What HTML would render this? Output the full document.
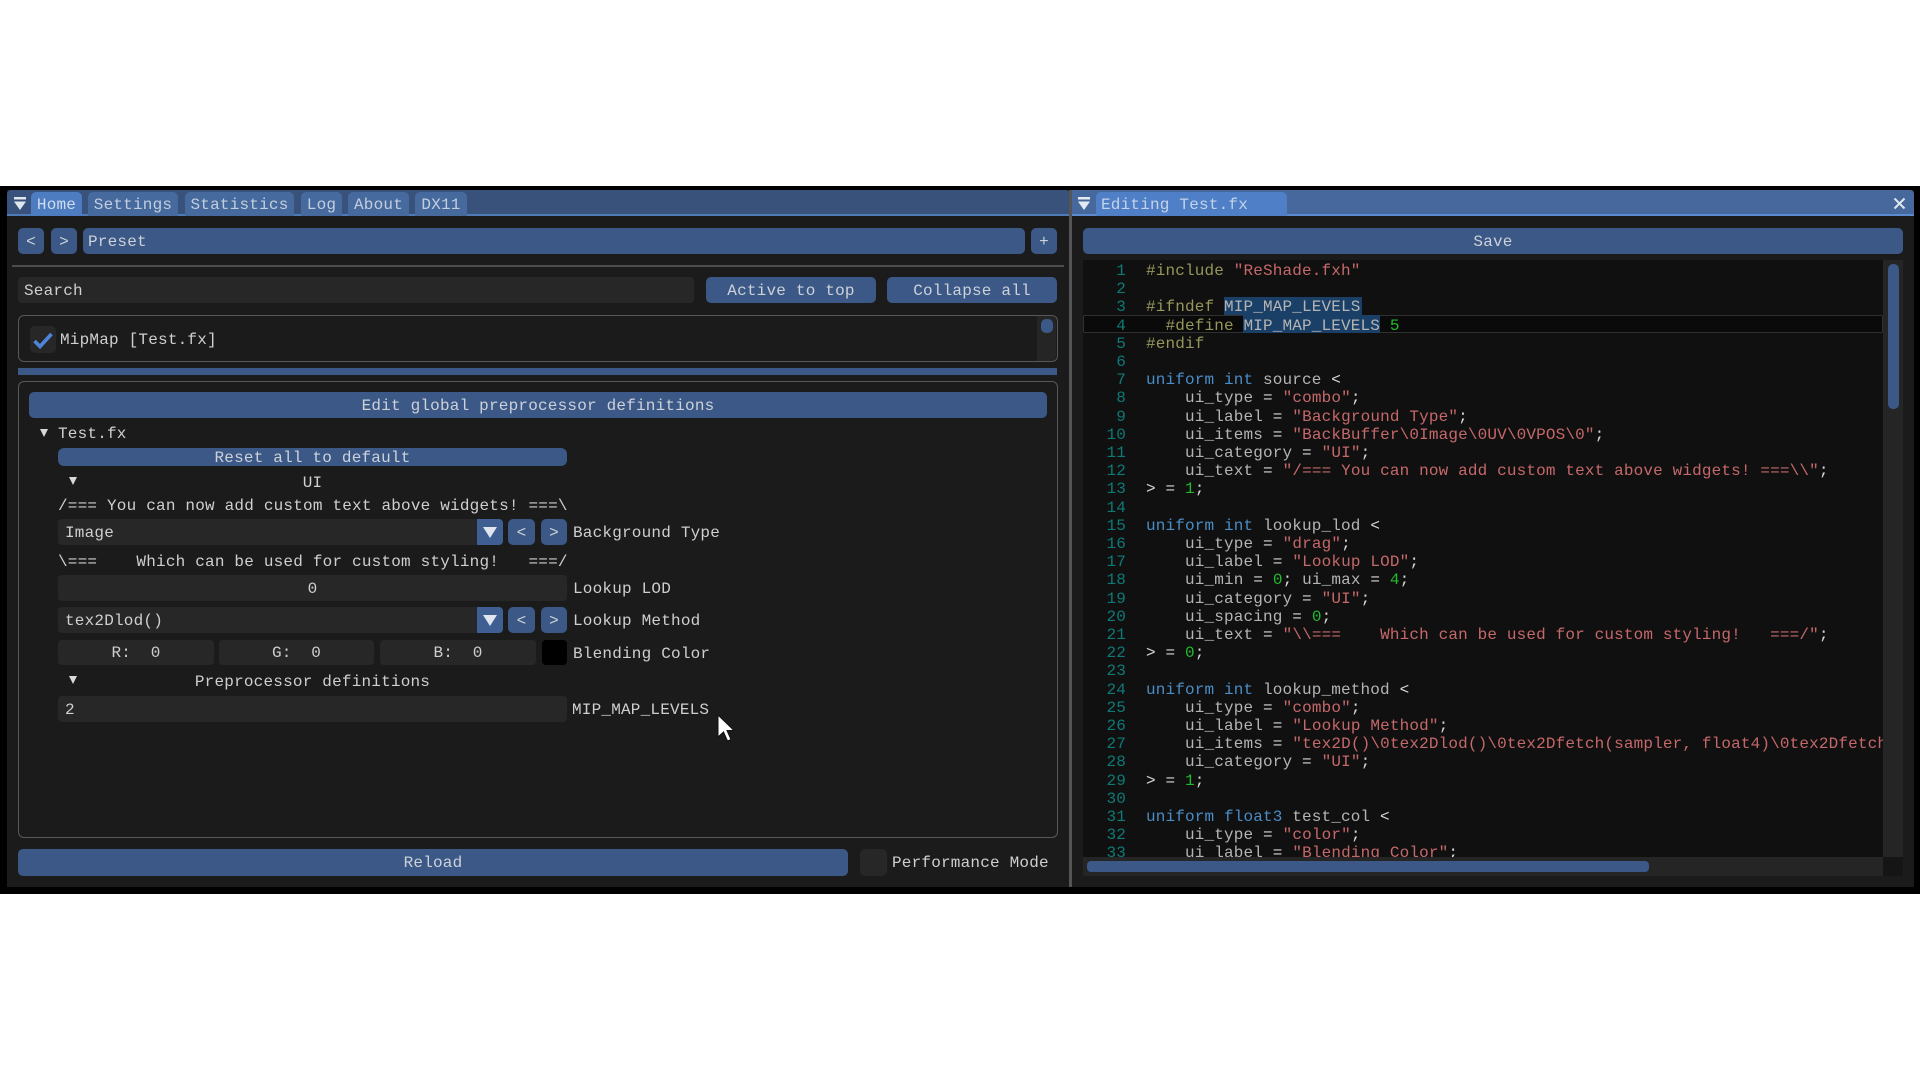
<!DOCTYPE html>
<html><head><meta charset="utf-8"><style>
html,body{margin:0;padding:0;background:#fff;width:1920px;height:1080px;overflow:hidden}
*{box-sizing:border-box}
#r{position:relative;width:1920px;height:1080px;overflow:hidden;font:16px/20px "Liberation Mono",monospace;letter-spacing:.2px;color:#cfcfcf;filter:blur(.35px)}
#r div{position:absolute}
.t{white-space:pre;height:20px;transform:translateY(1px)}
.c{text-align:center}
.b{background:#3b5886;border-radius:5px;text-align:center;color:#cdd2d9;white-space:pre;padding-top:1px}
.f{background:#272727;border-radius:4px;white-space:pre;padding-top:1px}
.tab{background:#476a9e;border-radius:5px 5px 0 0;top:192px;height:24px;line-height:25px;text-align:center;color:#c2cedd;padding-top:1px}
.box{border:1.5px solid #585858;border-radius:6px;background:#1b1b1b}
.tri{width:0;height:0;border-left:4px solid transparent;border-right:4px solid transparent;border-top:8px solid #d8d8d8}
.drop{background:#3f5f92;border-radius:0 4px 4px 0}
.drop i{position:absolute;left:6px;top:8px;width:0;height:0;border-left:7px solid transparent;border-right:7px solid transparent;border-top:11px solid #dfe6ee}
.ln{left:1086px;width:40px;text-align:right;color:#0e7a76;letter-spacing:.15px;transform:translateY(1px)}
.cd{left:1146px;white-space:pre;color:#b4b4b4;letter-spacing:.15px;transform:translateY(1px)}
.p{color:#96965a}.s{color:#c5686a}.k{color:#4a8cc6}.n{color:#22bb2e}.o{color:#d8d8d8}
</style></head><body><div id="r">
<div style="left:0;top:186px;width:1920px;height:708px;background:#000"></div>

<!-- left window -->
<div style="left:7px;top:190px;width:1063px;height:697px;background:#1b1b1b"></div>
<div style="left:7px;top:190px;width:1063px;height:26px;background:#38527b;border-bottom:2px solid #4f7ab8;border-radius:4px 4px 0 0"></div>
<svg style="position:absolute;left:12px;top:197px" width="16" height="14"><rect x="2" y="0" width="12" height="2.5" fill="#dfe6ee"/><path d="M2 4.5H14L8 13Z" fill="#dfe6ee"/></svg>
<div class="tab" style="left:31px;width:51px;background:#4e7cc0;color:#cfdcee">Home</div>
<div class="tab" style="left:88px;width:90px">Settings</div>
<div class="tab" style="left:185px;width:109px">Statistics</div>
<div class="tab" style="left:301px;width:41px">Log</div>
<div class="tab" style="left:348px;width:61px">About</div>
<div class="tab" style="left:415px;width:52px">DX11</div>

<div class="b" style="left:18px;top:228px;width:26px;height:26px;line-height:26px">&lt;</div>
<div class="b" style="left:51px;top:228px;width:26px;height:26px;line-height:26px">&gt;</div>
<div class="b" style="left:83px;top:228px;width:942px;height:26px;line-height:26px;text-align:left;padding-left:5px">Preset</div>
<div class="b" style="left:1031px;top:228px;width:26px;height:26px;line-height:26px">+</div>
<div style="left:12px;top:265px;width:1052px;height:2px;background:#4c4c4c"></div>

<div class="f" style="left:18px;top:277px;width:676px;height:26px;line-height:26px;padding-left:6px">Search</div>
<div class="b" style="left:706px;top:277px;width:170px;height:26px;line-height:26px">Active to top</div>
<div class="b" style="left:887px;top:277px;width:170px;height:26px;line-height:26px">Collapse all</div>

<div class="box" style="left:18px;top:315px;width:1040px;height:47px"></div>
<div style="left:1037px;top:316px;width:19px;height:45px;background:#252525;border-radius:0 5px 5px 0"></div>
<div style="left:1041px;top:319px;width:12px;height:14px;background:#3b5886;border-radius:5px"></div>
<div class="f" style="left:30px;top:326px;width:26px;height:27px;border-radius:5px"></div>
<svg style="position:absolute;left:30px;top:326px" width="26" height="27"><path d="M4.5 15L10 20.5L21.5 8" fill="none" stroke="#4d86d8" stroke-width="3.6"/></svg>
<div class="t" style="left:60px;top:329px">MipMap [Test.fx]</div>

<div style="left:18px;top:368px;width:1039px;height:7px;background:#3b5886"></div>

<div class="box" style="left:18px;top:381px;width:1040px;height:457px"></div>
<div class="b" style="left:29px;top:392px;width:1018px;height:26px;line-height:26px">Edit global preprocessor definitions</div>
<div class="tri" style="left:40px;top:429px"></div>
<div class="t" style="left:58px;top:423px">Test.fx</div>
<div class="b" style="left:58px;top:448px;width:509px;height:18px;line-height:18px;border-radius:6px">Reset all to default</div>
<div class="tri" style="left:69px;top:477px"></div>
<div class="t c" style="left:58px;top:472px;width:509px">UI</div>
<div class="t" style="left:58px;top:495px">/=== You can now add custom text above widgets! ===\</div>

<div class="f" style="left:58px;top:519px;width:419px;height:26px;line-height:26px;padding-left:7px;border-radius:4px 0 0 4px">Image</div>
<div class="drop" style="left:477px;top:519px;width:26px;height:26px"><i></i></div>
<div class="b" style="left:508px;top:519px;width:27px;height:26px;line-height:26px">&lt;</div>
<div class="b" style="left:541px;top:519px;width:26px;height:26px;line-height:26px">&gt;</div>
<div class="t" style="left:573px;top:522px">Background Type</div>

<div class="t" style="left:58px;top:551px">\===    Which can be used for custom styling!   ===/</div>

<div class="f c" style="left:58px;top:575px;width:509px;height:26px;line-height:26px">0</div>
<div class="t" style="left:573px;top:578px">Lookup LOD</div>

<div class="f" style="left:58px;top:607px;width:419px;height:26px;line-height:26px;padding-left:7px;border-radius:4px 0 0 4px">tex2Dlod()</div>
<div class="drop" style="left:477px;top:607px;width:26px;height:26px"><i></i></div>
<div class="b" style="left:508px;top:607px;width:27px;height:26px;line-height:26px">&lt;</div>
<div class="b" style="left:541px;top:607px;width:26px;height:26px;line-height:26px">&gt;</div>
<div class="t" style="left:573px;top:610px">Lookup Method</div>

<div class="f c" style="left:58px;top:640px;width:156px;height:25px;line-height:25px">R:  0</div>
<div class="f c" style="left:219px;top:640px;width:155px;height:25px;line-height:25px">G:  0</div>
<div class="f c" style="left:380px;top:640px;width:156px;height:25px;line-height:25px">B:  0</div>
<div style="left:542px;top:640px;width:25px;height:25px;background:#000;border-radius:4px"></div>
<div class="t" style="left:573px;top:643px">Blending Color</div>

<div class="tri" style="left:69px;top:676px"></div>
<div class="t c" style="left:58px;top:671px;width:509px">Preprocessor definitions</div>

<div class="f" style="left:58px;top:696px;width:509px;height:26px;line-height:26px;padding-left:7px">2</div>
<div class="t" style="left:572px;top:699px">MIP_MAP_LEVELS</div>

<svg style="position:absolute;left:716px;top:713px" width="20" height="30"><path d="M2 2V24L7.5 19L11.5 28L15 26.5L11 17.5H18Z" fill="#fff" stroke="#111" stroke-width="1"/></svg>

<div class="b" style="left:18px;top:849px;width:830px;height:27px;line-height:27px">Reload</div>
<div class="f" style="left:860px;top:849px;width:27px;height:27px;border-radius:5px"></div>
<div class="t" style="left:892px;top:852px">Performance Mode</div>

<!-- divider -->
<div style="left:1069px;top:190px;width:3px;height:697px;background:#555"></div>

<!-- right window -->
<div style="left:1072px;top:190px;width:842px;height:697px;background:#1b1b1b"></div>
<div style="left:1072px;top:190px;width:842px;height:26px;background:#46689c;border-bottom:2px solid #5b8ad0;border-radius:0 4px 0 0"></div>
<svg style="position:absolute;left:1076px;top:197px" width="16" height="14"><rect x="2" y="0" width="12" height="2.5" fill="#e4eaf2"/><path d="M2 4.5H14L8 13Z" fill="#e4eaf2"/></svg>
<div class="tab" style="left:1096px;width:191px;background:#4f7fc6;color:#c4d3e8;text-align:left;padding-left:5px">Editing Test.fx</div>
<svg style="position:absolute;left:1893px;top:197px" width="13" height="13"><path d="M1.5 1.5L11.5 11.5M11.5 1.5L1.5 11.5" stroke="#dfe6ee" stroke-width="2"/></svg>
<div class="b" style="left:1083px;top:228px;width:820px;height:26px;line-height:26px">Save</div>

<div id="ed" style="left:1083px;top:260px;width:800px;height:597px;background:#101010"></div>
<div style="left:1883px;top:260px;width:20px;height:597px;background:#252525"></div>
<div style="left:1888px;top:264px;width:11px;height:145px;background:#3b5886;border-radius:5px"></div>
<div style="left:1083px;top:857px;width:800px;height:19px;background:#252525"></div>
<div style="left:1087px;top:861px;width:562px;height:11px;background:#3b5886;border-radius:4px"></div>
<div style="left:1883px;top:857px;width:20px;height:19px;background:#151515"></div>

<div style="left:1083px;top:315px;width:800px;height:18px;background:#0a0a0a;border:1.5px solid #303030;border-radius:2px"></div>
<div style="left:1224px;top:297px;width:138px;height:18px;background:#1b4068"></div>
<div style="left:1243px;top:315px;width:137px;height:18px;background:#1b4068"></div>

<div style="left:1083px;top:260px;width:800px;height:597px;overflow:hidden">
<div style="left:-1083px;top:-260px;width:1920px;height:1080px">
<div class="ln" style="top:260px">1</div><div class="cd" style="top:260px"><span class="p">#include</span> <span class="s">"ReShade.fxh"</span></div>
<div class="ln" style="top:278.2px">2</div>
<div class="ln" style="top:296.4px">3</div><div class="cd" style="top:296.4px"><span class="p">#ifndef</span> MIP_MAP_LEVELS</div>
<div class="ln" style="top:314.6px">4</div><div class="cd" style="top:314.6px">  <span class="p">#define</span> MIP_MAP_LEVELS <span class="n">5</span></div>
<div class="ln" style="top:332.8px">5</div><div class="cd" style="top:332.8px"><span class="p">#endif</span></div>
<div class="ln" style="top:351px">6</div>
<div class="ln" style="top:369.2px">7</div><div class="cd" style="top:369.2px"><span class="k">uniform int</span> source <span class="o">&lt;</span></div>
<div class="ln" style="top:387.4px">8</div><div class="cd" style="top:387.4px">    ui_type <span class="o">=</span> <span class="s">"combo"</span><span class="o">;</span></div>
<div class="ln" style="top:405.6px">9</div><div class="cd" style="top:405.6px">    ui_label <span class="o">=</span> <span class="s">"Background Type"</span><span class="o">;</span></div>
<div class="ln" style="top:423.8px">10</div><div class="cd" style="top:423.8px">    ui_items <span class="o">=</span> <span class="s">"BackBuffer\0Image\0UV\0VPOS\0"</span><span class="o">;</span></div>
<div class="ln" style="top:442px">11</div><div class="cd" style="top:442px">    ui_category <span class="o">=</span> <span class="s">"UI"</span><span class="o">;</span></div>
<div class="ln" style="top:460.2px">12</div><div class="cd" style="top:460.2px">    ui_text <span class="o">=</span> <span class="s">"/=== You can now add custom text above widgets! ===\\"</span><span class="o">;</span></div>
<div class="ln" style="top:478.4px">13</div><div class="cd" style="top:478.4px"><span class="o">&gt; =</span> <span class="n">1</span><span class="o">;</span></div>
<div class="ln" style="top:496.6px">14</div>
<div class="ln" style="top:514.8px">15</div><div class="cd" style="top:514.8px"><span class="k">uniform int</span> lookup_lod <span class="o">&lt;</span></div>
<div class="ln" style="top:533px">16</div><div class="cd" style="top:533px">    ui_type <span class="o">=</span> <span class="s">"drag"</span><span class="o">;</span></div>
<div class="ln" style="top:551.2px">17</div><div class="cd" style="top:551.2px">    ui_label <span class="o">=</span> <span class="s">"Lookup LOD"</span><span class="o">;</span></div>
<div class="ln" style="top:569.4px">18</div><div class="cd" style="top:569.4px">    ui_min <span class="o">=</span> <span class="n">0</span><span class="o">;</span> ui_max <span class="o">=</span> <span class="n">4</span><span class="o">;</span></div>
<div class="ln" style="top:587.6px">19</div><div class="cd" style="top:587.6px">    ui_category <span class="o">=</span> <span class="s">"UI"</span><span class="o">;</span></div>
<div class="ln" style="top:605.8px">20</div><div class="cd" style="top:605.8px">    ui_spacing <span class="o">=</span> <span class="n">0</span><span class="o">;</span></div>
<div class="ln" style="top:624px">21</div><div class="cd" style="top:624px">    ui_text <span class="o">=</span> <span class="s">"\\===    Which can be used for custom styling!   ===/"</span><span class="o">;</span></div>
<div class="ln" style="top:642.2px">22</div><div class="cd" style="top:642.2px"><span class="o">&gt; =</span> <span class="n">0</span><span class="o">;</span></div>
<div class="ln" style="top:660.4px">23</div>
<div class="ln" style="top:678.6px">24</div><div class="cd" style="top:678.6px"><span class="k">uniform int</span> lookup_method <span class="o">&lt;</span></div>
<div class="ln" style="top:696.8px">25</div><div class="cd" style="top:696.8px">    ui_type <span class="o">=</span> <span class="s">"combo"</span><span class="o">;</span></div>
<div class="ln" style="top:715px">26</div><div class="cd" style="top:715px">    ui_label <span class="o">=</span> <span class="s">"Lookup Method"</span><span class="o">;</span></div>
<div class="ln" style="top:733.2px">27</div><div class="cd" style="top:733.2px;width:737px;overflow:hidden">    ui_items <span class="o">=</span> <span class="s">"tex2D()\0tex2Dlod()\0tex2Dfetch(sampler, float4)\0tex2Dfetch(sampler, float4)"</span></div>
<div class="ln" style="top:751.4px">28</div><div class="cd" style="top:751.4px">    ui_category <span class="o">=</span> <span class="s">"UI"</span><span class="o">;</span></div>
<div class="ln" style="top:769.6px">29</div><div class="cd" style="top:769.6px"><span class="o">&gt; =</span> <span class="n">1</span><span class="o">;</span></div>
<div class="ln" style="top:787.8px">30</div>
<div class="ln" style="top:806px">31</div><div class="cd" style="top:806px"><span class="k">uniform float3</span> test_col <span class="o">&lt;</span></div>
<div class="ln" style="top:824.2px">32</div><div class="cd" style="top:824.2px">    ui_type <span class="o">=</span> <span class="s">"color"</span><span class="o">;</span></div>
<div class="ln" style="top:842.4px">33</div><div class="cd" style="top:842.4px">    ui_label <span class="o">=</span> <span class="s">"Blending Color"</span><span class="o">;</span></div>
</div></div>
</div></body></html>
